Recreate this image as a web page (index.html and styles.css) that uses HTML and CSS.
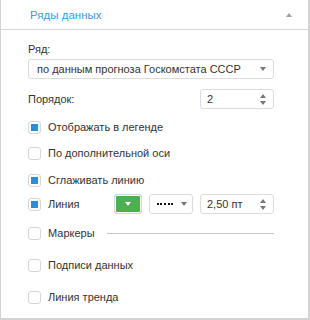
FILE: index.html
```html
<!DOCTYPE html>
<html lang="ru">
<head>
  <meta charset="UTF-8">
  <title>Ряды данных</title>
  <link rel="stylesheet" href="styles.css">
</head>
<body>
  <div class="panel">
    <div class="panel-head">
      <span class="panel-title">Ряды данных</span>
      <span class="caret-up"></span>
    </div>
    <div class="panel-body">
      <div class="field-label">Ряд:</div>
      <div class="combo wide">
        <span class="combo-text">по данным прогноза Госкомстата СССР</span>
        <span class="caret-down"></span>
      </div>

      <div class="row order-row">
        <span class="row-label">Порядок:</span>
        <div class="spin">
          <span class="spin-text">2</span>
          <span class="spin-arrows"><i class="caret-up"></i><i class="caret-down"></i></span>
        </div>
      </div>

      <label class="check r1"><span class="box checked"></span>Отображать в легенде</label>
      <label class="check r2"><span class="box"></span>По дополнительной оси</label>
      <label class="check r3"><span class="box checked"></span>Сглаживать линию</label>

      <div class="check r4 line-row">
        <span class="box checked"></span>
        <span class="line-label">Линия</span>
        <button class="color-btn"><span class="caret-down white"></span></button>
        <div class="combo dash">
          <span class="dots"></span>
          <span class="caret-down"></span>
        </div>
        <div class="spin">
          <span class="spin-text">2,50 пт</span>
          <span class="spin-arrows"><i class="caret-up"></i><i class="caret-down"></i></span>
        </div>
      </div>

      <div class="check r5">
        <span class="box"></span>
        <span>Маркеры</span>
        <span class="rule"></span>
      </div>

      <label class="check r6"><span class="box"></span>Подписи данных</label>
      <label class="check r7"><span class="box"></span>Линия тренда</label>
    </div>
  </div>
</body>
</html>
```

FILE: styles.css
```css
/* Reset */
* { box-sizing: border-box; }
html, body { margin: 0; padding: 0; background: #fff; }

body {
  font-family: "Liberation Sans", Arial, sans-serif;
  font-size: 11px;
  color: #333;
}

/* Panel */
.panel {
  width: 310px;
  height: 320px;
  border: 1px solid #d2d2d2;
  border-top: none;
  border-right-width: 2px;
  border-bottom-width: 2px;
}

.panel-head {
  height: 30px;
  border-bottom: 1px solid #d8d8d8;
  display: flex;
  align-items: center;
  justify-content: space-between;
  padding: 0 16px 0 29px;
}
.panel-title { color: #3a9be0; font-size: 11.5px; }

.panel-body { padding: 9px 34px 0 27px; }

/* Carets */
.caret-up, .caret-down {
  display: inline-block;
  width: 0; height: 0;
  border-left: 3.5px solid transparent;
  border-right: 3.5px solid transparent;
}
.caret-up { border-bottom: 4px solid #a0a0a0; }
.caret-down { border-top: 4px solid #777; }
.caret-down.white { border-top-color: #fff; }

/* Fields */
.field-label { height: 20px; line-height: 20px; }

.combo, .spin {
  height: 20px;
  border: 1px solid #dcdcdc;
  border-radius: 3px;
  display: flex;
  align-items: center;
  justify-content: space-between;
  background: #fff;
}
.combo.wide { padding: 0 7px 0 8px; }
.combo-text { white-space: nowrap; }

.row { display: flex; align-items: center; justify-content: space-between; }
.order-row { margin-top: 10px; height: 20px; }

.spin { width: 74px; padding: 0 7px 0 6px; }
.spin-arrows { display: flex; flex-direction: column; gap: 3px; }
.spin-arrows .caret-up { border-bottom-color: #777; }

/* Checkboxes */
.check {
  display: flex;
  align-items: center;
  height: 20px;
  gap: 7px;
}
.box {
  width: 13px; height: 13px;
  border: 1px solid #d6d6d6;
  border-radius: 3px;
  flex-shrink: 0;
  display: flex;
  align-items: center;
  justify-content: center;
  background: #fff;
}
.box.checked::after {
  content: "";
  width: 7px; height: 7px;
  background: #2b8ed6;
}

.r1 { margin-top: 8px; }
.r2 { margin-top: 6px; }
.r3 { margin-top: 7px; }
.r4 { margin-top: 4px; }
.r5 { margin-top: 9px; }
.r6 { margin-top: 12px; }
.r7 { margin-top: 12px; }

/* Line row */
.line-label { width: 59px; }
.color-btn {
  width: 28px; height: 20px;
  border: 1px solid #d6d6d6;
  border-radius: 3px;
  background: #4caf50;
  box-shadow: inset 0 0 0 1px #fff;
  padding: 0;
  display: flex;
  align-items: center;
  justify-content: center;
}
.combo.dash { width: 44px; padding: 0 5px 0 7px; }
.dots { width: 16px; border-top: 2px dotted #111; }

.rule { flex: 1; border-top: 1px solid #c8c8c8; margin-left: 5px; }
```
